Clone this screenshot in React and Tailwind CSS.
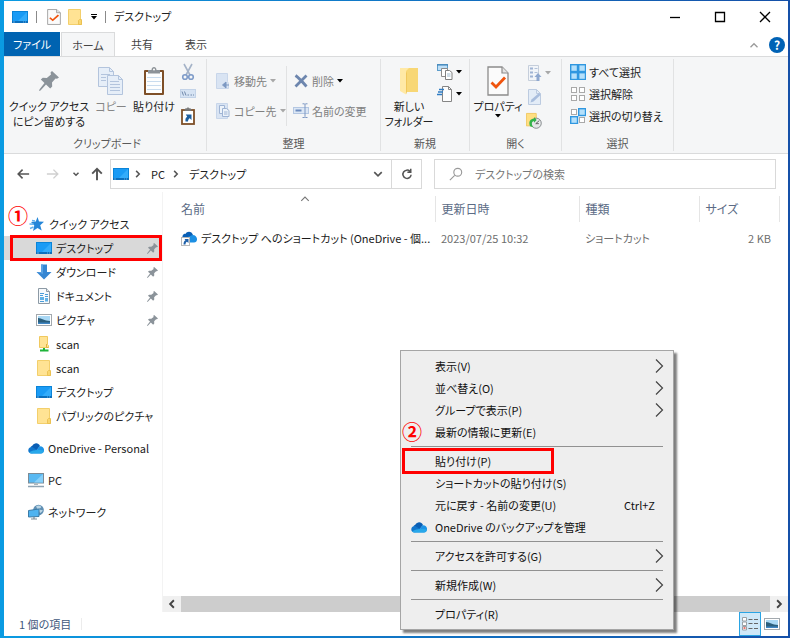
const MENU = [
  [
    { label: '表示(V)', sub: true },
    { label: '並べ替え(O)', sub: true },
    { label: 'グループで表示(P)', sub: true },
    { label: '最新の情報に更新(E)', mark: '②' },
  ],
  [
    { label: '貼り付け(P)', boxed: true },
    { label: 'ショートカットの貼り付け(S)' },
    { label: '元に戻す - 名前の変更(U)', keys: 'Ctrl+Z' },
    { label: 'OneDrive のバックアップを管理', icon: <CloudIcon /> },
  ],
  [{ label: 'アクセスを許可する(G)', sub: true }],
  [{ label: '新規作成(W)', sub: true }],
  [{ label: 'プロパティ(R)' }],
]

const QUICK = [
  { label: 'デスクトップ', icon: <DesktopIcon />, pinned: true, selected: true },
  { label: 'ダウンロード', icon: <DownloadIcon />, pinned: true },
  { label: 'ドキュメント', icon: <DocumentIcon />, pinned: true },
  { label: 'ピクチャ', icon: <PictureIcon />, pinned: true },
  { label: 'scan', icon: <NetFolderIcon /> },
  { label: 'scan', icon: <FolderIcon /> },
  { label: 'デスクトップ', icon: <DesktopIcon /> },
  { label: 'パブリックのピクチャ', icon: <FolderIcon /> },
]

const ROOTS = [
  { label: 'OneDrive - Personal', icon: <CloudIcon /> },
  { label: 'PC', icon: <PcIcon /> },
  { label: 'ネットワーク', icon: <NetworkIcon /> },
]

/* ---------- icons ---------- */

function DesktopIcon() {
  return (
    <svg viewBox="0 0 16 16" className="size-4 shrink-0">
      <rect x="0" y="2" width="16" height="12" fill="#0a84d8" />
      <path d="M1 3h14v9H1z" fill="#1a9bf5" />
      <path d="M15 3v9H6z" fill="#33acfb" />
      <path d="M0 12h16v2H0z" fill="#0b6fbd" />
      <path d="M1 13h2M11 13h1M13 13h1" stroke="#9fd7ff" strokeWidth=".6" />
    </svg>
  )
}

function FolderIcon() {
  return (
    <svg viewBox="0 0 16 16" className="size-4 shrink-0">
      <path d="M1.500.500h12v10l1 1v4h-13z" fill="#ffe394" stroke="#f3cf6b" />
      <path d="M12.500 10.500h2v5h-3v-4z" fill="#f9d66f" stroke="#e9bd4b" strokeWidth=".8" />
    </svg>
  )
}

function NetFolderIcon() {
  return (
    <svg viewBox="0 0 16 16" className="size-4 shrink-0">
      <path d="M3.500.500h8v8l1 1v2h-9z" fill="#ffe394" stroke="#f0c95f" />
      <path d="M10.500 8v3.500h2" fill="none" stroke="#e3b23c" />
      <path d="M8 12v2.500M4 14.500h8.500" stroke="#1fb43a" strokeWidth="2" />
    </svg>
  )
}

function CloudIcon() {
  return (
    <svg viewBox="0 0 16 16" className="size-4 shrink-0">
      <path d="M4.500 5.500C6 2.500 10.500 2 12 6l-4 5-5.500-4z" fill="#0a5fb5" />
      <path d="M3.600 13.500C-1 13.300-.8 7.200 4 6.800l6 4z" fill="#1276cc" />
      <path d="M11.500 6.300c5.500-.5 6 6.800 1.500 7.200H3.500L9.500 9z" fill="#1c93e6" />
      <path d="M1.200 12.300C5 10.500 8 9.500 15.800 10.500c-.2 1.700-1.300 3-3 3H3.800c-1.200 0-2-.4-2.600-1.200z" fill="#28a8ea" />
    </svg>
  )
}

function ShortcutCloudIcon() {
  return (
    <svg viewBox="0 0 16 16" className="size-4 shrink-0">
      <path d="M1.500 8C1 4 4 3.500 4.500 4 6 .500 11 1 12 5L8 10z" fill="#0a5fb5" />
      <path d="M11.300 5C17 4.700 17.500 12.500 13 12.500H7L4.500 8 8 6.500z" fill="#1c8fe3" />
      <rect x=".5" y="7.500" width="8" height="8" fill="#fff" stroke="#b8b8b8" />
      <path d="M2.500 14.500c0-3 1-4 2-4.300L3.500 9H7.500v4L6 11.700c-1 .3-1.500 1.300-1.500 2.800z" fill="#1e5fa8" />
    </svg>
  )
}

function DownloadIcon() {
  return (
    <svg viewBox="0 0 16 16" className="size-4 shrink-0">
      <path d="M5 .500h6V8h4.500L8 15.500.500 8H5z" fill="#3787d3" />
      <path d="M5 .500h2V10L1 8h4z" fill="#5aa2e2" />
    </svg>
  )
}

function DocumentIcon() {
  return (
    <svg viewBox="0 0 16 16" className="size-4 shrink-0">
      <path d="M2.500.500h8l3 3v12h-11z" fill="#f5f9fc" stroke="#8d9aa5" />
      <path d="M10.500.500v3h3" fill="#dde5eb" stroke="#8d9aa5" />
      <path d="M4 5.500h4M4 7.500h3M9 6.500h3M9 8.500h3M4 13.500h4" stroke="#4a9cd8" />
      <path d="M4 9h4v3H4zM9 10h3v3.500H9z" fill="#5fb0e6" />
    </svg>
  )
}

function PictureIcon() {
  return (
    <svg viewBox="0 0 16 16" className="size-4 shrink-0">
      <rect x=".5" y="2.500" width="15" height="11" fill="#fff" stroke="#a3a9ae" />
      <rect x="2" y="4" width="12" height="8" fill="#a9d8f5" />
      <path d="M2 6c4 0 6 3 12 3v3H2z" fill="#2b5f7d" />
      <path d="M2 10.500h12V12H2z" fill="#3f86c4" />
    </svg>
  )
}

function PcIcon() {
  return (
    <svg viewBox="0 0 16 16" className="size-4 shrink-0">
      <rect x=".5" y="1.500" width="15" height="9.500" fill="#59b9f2" stroke="#7c8b96" />
      <path d="M15 2v8.500H6z" fill="#86d0fa" />
      <path d="M6 11.500h4v1.500H6z" fill="#a9b5bd" />
      <path d="M0 14.500h16" stroke="#8fa3b2" strokeWidth="1.500" />
    </svg>
  )
}

function NetworkIcon() {
  return (
    <svg viewBox="0 0 16 16" className="size-4 shrink-0">
      <circle cx="10.500" cy="6" r="5.300" fill="#5f8fb3" />
      <path d="M8 2.500c2-1.500 4-1 5 0s-1 2-2 2 1 1.500 3 1.500-1 3-2 3z" fill="#b9d4e4" />
      <path d="M.500 6.500l10.500-1.500v7.500l-10.500.500z" fill="#4fb3f0" stroke="#3c7ba6" />
      <path d="M6 13v1.500M3 15h6" stroke="#7c8b96" strokeWidth="1.200" />
    </svg>
  )
}

function StarIcon() {
  return (
    <svg viewBox="0 0 16 16" className="size-4 shrink-0">
      <path d="M8.500 1l1.500 4.500 5 .3-3.800 3.500 1.500 5.200L8.500 12 4 15l1.300-5.500L2 6l4.800-.5z" fill="#2586d8" />
      <path d="M3 4.500l3 .5M.500 8l4.500.300M1 12.500l3.500-1.500" stroke="#63b2ee" strokeWidth="1.400" />
    </svg>
  )
}

function PinIcon({ className = 'size-3' }) {
  return (
    <svg viewBox="0 0 20 20" className={`shrink-0 ${className}`}>
      <path d="M13 0l7 6.500-2 1.300-1.500-.3-3.500 4 .2 4-2 2-4.200-4L1.500 19.500 0 20l.6-1.700L5.500 12 1.800 8.500l2-1.800 4 .3 4.200-3.500-.5-2z" fill="#8b939a" />
    </svg>
  )
}

function PropertiesIcon({ className = 'h-4 w-3.5' }) {
  return (
    <svg viewBox="0 0 22 30" preserveAspectRatio="none" className={className}>
      <path d="M1 1h14l6 6v22H1z" fill="#fbfbfb" stroke="#8c8c8c" strokeWidth="1.300" />
      <path d="M15 1v6h6" fill="#e4e4e4" stroke="#8c8c8c" strokeWidth="1.200" />
      <path d="M4.500 16.500l4.500 4.500 9-9.500" fill="none" stroke="#f0540e" strokeWidth="2.800" />
    </svg>
  )
}

function CopyIcon() {
  return (
    <svg viewBox="0 0 26 28" className="h-7 w-[26px]">
      <g fill="#e6eef8" stroke="#b3c4dd">
        <path d="M.500.500h11l4 4v15H.500z" />
        <path d="M11.500.500v4h4" fill="none" />
        <path d="M3 7.500h9M3 10.500h5M3 13.500h5" />
        <path d="M9.500 8.500h11l4 4v15h-15z" />
        <path d="M20.500 8.500v4h4" fill="none" />
        <path d="M12 14.500h9M12 17.500h10M12 20.500h10M12 23.500h10" />
      </g>
    </svg>
  )
}

function PasteIcon() {
  return (
    <svg viewBox="0 0 22 30" className="h-[30px] w-[22px]">
      <rect x="1" y="4" width="20" height="25" rx="1" fill="#7e4f27" />
      <rect x="3" y="6" width="16" height="21" fill="#fdfefe" />
      <path d="M4 11.500h14M4 15.500h14M4 19.500h14M4 23.500h14" stroke="#c9dcee" />
      <path d="M5 7.500V4h3.500C8.500 0 13.500 0 13.500 4H17v3.500z" fill="#8d9398" />
      <circle cx="11" cy="3.500" r="1" fill="#fff" />
    </svg>
  )
}

function CutIcon() {
  return (
    <svg viewBox="0 0 14 18" className="h-[18px] w-3.5" fill="none">
      <path d="M3 1l6 11M11 1L5 12" stroke="#a5b3c8" strokeWidth="1.600" />
      <circle cx="4" cy="14" r="2.300" stroke="#7f9cc9" strokeWidth="1.600" />
      <circle cx="10" cy="14" r="2.300" stroke="#7f9cc9" strokeWidth="1.600" />
    </svg>
  )
}

function CopyPathIcon() {
  return (
    <svg viewBox="0 0 16 10" className="h-2.5 w-4">
      <rect x=".5" y=".5" width="15" height="8" fill="#d6e3f3" stroke="#c3d3e8" />
      <path d="M2 2.500l1.500 4M4.500 2.500l1.500 4M7.500 6H9M10.500 6H12M13 6h1" stroke="#7189ab" />
    </svg>
  )
}

function PasteShortcutIcon() {
  return (
    <svg viewBox="0 0 14 18" className="h-[18px] w-3.5">
      <rect x="1" y="3" width="12" height="14" fill="#fff" stroke="#7e4f27" strokeWidth="1.800" />
      <path d="M4 3.500h6V2H8.500C8 .500 6 .500 5.500 2H4z" fill="#777" stroke="#777" />
      <path d="M4.500 14.500c-.3-3 .3-4 1.700-4.800L4.800 7.500H10.500v5.500L8.700 11.300c-1 .5-1.500 1.500-1.700 3.200z" fill="#1d5e9e" />
    </svg>
  )
}

function MoveToIcon() {
  return (
    <svg viewBox="0 0 14 16" className="h-4 w-3.5">
      <path d="M.500.500h11v8l1 2v5H.500z" fill="#d9e4f3" stroke="#c8d6ea" />
      <path d="M13 12H8M10 9l-3.500 3L10 15z" fill="#7d98c2" stroke="#7d98c2" />
    </svg>
  )
}

function CopyToIcon() {
  return (
    <svg viewBox="0 0 14 16" className="h-4 w-3.5">
      <path d="M.500.500h11v15H.500z" fill="#d9e4f3" stroke="#c8d6ea" />
      <path d="M3.500 2.500h5v8h-5z" fill="#edf3fa" stroke="#9fb4d4" />
      <path d="M6.500 5.500h4l2.500 2v6H6.500z" fill="#edf3fa" stroke="#9fb4d4" />
      <path d="M8 9h3.500M8 11h3.500" stroke="#9fb4d4" />
    </svg>
  )
}

function DeleteIcon() {
  return (
    <svg viewBox="0 0 14 14" className="size-3.5">
      <path d="M1.500 1.500C5 4 9 8.500 12.500 12.500M12.500 1.500C9 5 5 9 1.500 12.500" stroke="#6d86ae" strokeWidth="2.800" />
    </svg>
  )
}

function RenameIcon() {
  return (
    <svg viewBox="0 0 16 16" className="size-4">
      <rect x=".5" y="4.500" width="15" height="6" fill="#dce7f5" stroke="#b4c7e2" />
      <path d="M2.500 7.500h6" stroke="#6d8cbf" strokeWidth="2" />
      <path d="M12 1.500v12M9.500.800h2l.5.700.5-.7h2M9.500 14.500h2l.5-.7.500.7h2" stroke="#7c97c3" fill="none" />
    </svg>
  )
}

function NewFolderIcon() {
  return (
    <svg viewBox="0 0 20 28" className="h-7 w-5">
      <path d="M6 1h13v24H6z" fill="#f8d775" />
      <path d="M1 1h9l-3 3v23.500L1 24z" fill="#ffe9a6" />
      <path d="M7 5l1 1v19l-1 2.500z" fill="#f0c75c" />
    </svg>
  )
}

function NewItemIcon() {
  return (
    <svg viewBox="0 0 16 16" className="size-4">
      <rect x=".5" y=".5" width="10" height="6" fill="#bfe0f8" stroke="#5d9dcb" />
      <path d="M0 1h11" stroke="#3b7fb4" />
      <path d="M4.500 4.500h6v8h-6z" fill="#fff" stroke="#8b8b8b" />
      <path d="M8.500 6.500h4l2.500 2v7H8.500z" fill="#fff" stroke="#7f7f7f" />
      <path d="M10 10h3.500M10 12h3.500" stroke="#9db8cc" />
    </svg>
  )
}

function EasyAccessIcon() {
  return (
    <svg viewBox="0 0 16 16" className="size-4">
      <path d="M5.500.500h6l3 3v12h-9z" fill="#fdfdfd" stroke="#858585" />
      <path d="M11.500.500v3h3" fill="none" stroke="#858585" />
      <path d="M2 3.500h5M1 6h5M0 8.500h5" stroke="#2f7cc4" strokeWidth="1.300" />
    </svg>
  )
}

function OpenIcon() {
  return (
    <svg viewBox="0 0 16 16" className="size-4">
      <path d="M2.500.500h10v15h-10z" fill="#f2f5f9" stroke="#c5cedb" />
      <path d="M4 2.500h3v2H4zM4 6.500h3v2H4zM4 10.500h3v2H4z" fill="#9fb4d4" />
      <path d="M8.500 3.500h3M8.500 7.500h3" stroke="#b3c2d8" />
      <path d="M12 8l3.500 4h-2v4h-3v-4h-2z" fill="#8fa8cf" />
    </svg>
  )
}

function EditIcon() {
  return (
    <svg viewBox="0 0 16 16" className="size-4">
      <path d="M2.500.500h8l4 4v11h-12z" fill="#e3ecf7" stroke="#bccbe0" />
      <path d="M10.500.500v4h4" fill="none" stroke="#bccbe0" />
      <path d="M4.500 13.500l1-3L13 4l1.500 2-7 6.500z" fill="#a8bddd" />
    </svg>
  )
}

function HistoryIcon() {
  return (
    <svg viewBox="0 0 18 18" className="size-[18px]">
      <path d="M.500.500h11v14H.500z" fill="#ffdf82" stroke="#efc65c" />
      <circle cx="11.500" cy="11.500" r="5.700" fill="#e4e7e8" stroke="#7d8285" />
      <path d="M11 12L15 8.500M11 12h3.500" stroke="#555" fill="none" />
      <path d="M4.500 15C2.500 9.500 5 6.500 9 6.500V4.500L12 8 9 11V9.300C6.500 9.300 5.500 12 8 16z" fill="#32b44a" />
    </svg>
  )
}

// Four cells, each either on (blue) or off (grey)
function CellsIcon({ cells }) {
  const spots = [[1, 1], [9, 1], [1, 9], [9, 9]]
  return (
    <svg viewBox="0 0 16 16" className="size-4">
      {cells.map((on, i) => {
        const [x, y] = spots[i]
        return on ? (
          <rect key={i} x={x - 0.3} y={y - 0.3} width="6.800" height="6.800" fill="#b5e0fb" stroke="#2f97e0" strokeWidth="1.400" />
        ) : (
          <rect key={i} x={x + 0.5} y={y + 0.5} width="5" height="5" fill="#fff" stroke="#a9a9a9" />
        )
      })}
    </svg>
  )
}

function Arrow({ className = 'text-black' }) {
  return (
    <svg viewBox="0 0 6 4" className={`h-1 w-1.5 shrink-0 ${className}`}>
      <path d="M0 0h6L3 3.500z" fill="currentColor" />
    </svg>
  )
}

function Line({ d, className, width = 1.5 }) {
  return (
    <svg viewBox="0 0 16 16" className={`shrink-0 ${className}`} fill="none" stroke="currentColor" strokeWidth={width}>
      <path d={d} />
    </svg>
  )
}

/* ---------- ribbon ---------- */

function Group({ title, className, children }) {
  return (
    <section className={`my-0.5 border-r border-[#e1e2e3] ${className}`}>
      <div className="flex h-[76px]">{children}</div>
      <h2 className="text-center leading-4 text-[#5a5a5a]">{title}</h2>
    </section>
  )
}

function BigButton({ icon, lines, className, children }) {
  return (
    <button className={`flex flex-col items-center leading-[15px] whitespace-nowrap ${className}`}>
      <span className="flex h-10 items-center justify-center pt-1">{icon}</span>
      {lines.map((line) => (
        <span key={line}>{line}</span>
      ))}
      {children}
    </button>
  )
}

function SmallButton({ icon, label, name, arrow, className = 'h-[22px]' }) {
  return (
    <button aria-label={name} className={`flex items-center gap-[3px] whitespace-nowrap ${className}`}>
      <span className="flex w-4 shrink-0 justify-center">{icon}</span>
      {label}
      {arrow && <Arrow className={arrow} />}
    </button>
  )
}

function Ribbon() {
  return (
    <div className="flex border-y border-[#dadbdc] bg-[#f5f6f7]">
      <Group title="クリップボード" className="w-[203px] pl-1">
        <BigButton className="w-[82px]" icon={<PinIcon className="size-5" />} lines={['クイック アクセス', 'にピン留めする']} />
        <BigButton className="w-[42px] text-[#858585]" icon={<CopyIcon />} lines={['コピー']} />
        <BigButton className="w-11" icon={<PasteIcon />} lines={['貼り付け']} />
        <div className="ml-1 pt-0.5">
          <SmallButton name="切り取り" icon={<CutIcon />} />
          <SmallButton name="パスのコピー" icon={<CopyPathIcon />} />
          <SmallButton name="ショートカットの貼り付け" icon={<PasteShortcutIcon />} />
        </div>
      </Group>
      <Group title="整理" className="w-[174px] text-[#808080]">
        <div className="mt-[7px] mb-[9px] w-20 border-r border-[#e1e2e3] pl-2">
          <SmallButton className="h-[30px]" icon={<MoveToIcon />} label="移動先" arrow="text-[#a8a8a8]" />
          <SmallButton className="h-[30px]" icon={<CopyToIcon />} label="コピー先" arrow="text-[#a8a8a8]" />
        </div>
        <div className="mt-[7px] pl-1.5">
          <SmallButton className="h-[30px]" icon={<DeleteIcon />} label="削除" arrow="text-black" />
          <SmallButton className="h-[30px]" icon={<RenameIcon />} label="名前の変更" />
        </div>
      </Group>
      <Group title="新規" className="w-[89px]">
        <BigButton className="w-14" icon={<NewFolderIcon />} lines={['新しい', 'フォルダー']} />
        <div className="pt-0.5">
          <SmallButton name="新しいアイテム" icon={<NewItemIcon />} arrow="text-black" />
          <SmallButton name="ショートカット" icon={<EasyAccessIcon />} arrow="text-black" />
        </div>
      </Group>
      <Group title="開く" className="w-[92px]">
        <BigButton className="w-14" icon={<PropertiesIcon className="h-[30px] w-[22px]" />} lines={['プロパティ']}>
          <Arrow />
        </BigButton>
        <div className="pt-0.5">
          <SmallButton name="開く" className="h-6" icon={<OpenIcon />} arrow="text-[#a8a8a8]" />
          <SmallButton name="編集" className="h-6" icon={<EditIcon />} />
          <SmallButton name="履歴" className="h-6" icon={<HistoryIcon />} />
        </div>
      </Group>
      <Group title="選択" className="w-28">
        <div className="pt-0.5 pl-2">
          <SmallButton icon={<CellsIcon cells={[1, 1, 1, 1]} />} label="すべて選択" />
          <SmallButton icon={<CellsIcon cells={[0, 0, 0, 0]} />} label="選択解除" />
          <SmallButton icon={<CellsIcon cells={[0, 1, 1, 0]} />} label="選択の切り替え" />
        </div>
      </Group>
    </div>
  )
}

/* ---------- window parts ---------- */

function TitleBar() {
  return (
    <header className="flex h-[31px] items-center pl-2">
      <DesktopIcon />
      <span className="ml-2 h-3 w-px bg-[#8a8a8a]" />
      <button aria-label="プロパティ" className="ml-2.5"><PropertiesIcon /></button>
      <button aria-label="新しいフォルダー" className="ml-1.5"><FolderIcon /></button>
      <button aria-label="カスタマイズ" className="ml-2 flex flex-col items-center gap-px">
        <span className="h-px w-1.5 bg-black" />
        <Arrow />
      </button>
      <span className="ml-2 h-3 w-px bg-[#8a8a8a]" />
      <h1 className="ml-2 flex-1">デスクトップ</h1>
      <div className="flex pr-px text-black">
        <button aria-label="最小化" className="flex w-[45px] justify-center"><Line d="M3 8.500h10" className="size-4" width={1.3} /></button>
        <button aria-label="最大化" className="flex w-[45px] justify-center"><Line d="M3.500 3.500h9v9h-9z" className="size-4" width={1.3} /></button>
        <button aria-label="閉じる" className="flex w-[45px] justify-center"><Line d="M3 3l10 10M13 3L3 13" className="size-4" width={1.3} /></button>
      </div>
    </header>
  )
}

function Tabs() {
  return (
    <div className="-mb-px flex h-[25px] items-stretch text-[#444]">
      <button className="mb-px w-14 bg-[#0063b1] text-white">ファイル</button>
      <button className="ml-px w-[54px] border border-b-0 border-[#dadbdc] bg-[#f5f6f7]">ホーム</button>
      <button className="w-[54px]">共有</button>
      <button className="w-[54px]">表示</button>
      <div className="ml-auto flex items-center gap-2 pr-[3px]">
        <button aria-label="リボンの最小化"><Line d="M4 10.500l4-4 4 4" className="size-3.5 text-[#9a9a9a]" /></button>
        <button aria-label="ヘルプ" className="flex size-4 items-center justify-center rounded-full bg-[#0062b5] text-xs font-bold text-white">?</button>
      </div>
    </div>
  )
}

function NavRow() {
  return (
    <div className="flex items-center gap-3 pt-[5px] pr-3 pb-[3px] pl-3">
      <div className="flex flex-1 items-center">
        <div className="flex w-[94px] shrink-0 items-center text-[#555]">
          <button aria-label="戻る"><Line d="M15 8H2.500M7.500 3l-5 5 5 5" className="size-3.5" width={1.8} /></button>
          <button aria-label="進む" className="ml-4 text-[#d0d0d0]"><Line d="M1 8h12.500M8.500 3l5 5-5 5" className="size-3.5" width={1.6} /></button>
          <button aria-label="履歴" className="ml-3"><Line d="M3 5.500l5 5 5-5" className="size-2" width={3} /></button>
          <button aria-label="上へ" className="ml-2.5"><Line d="M8 15V2M2.500 7.500L8 2l5.500 5.500" className="size-3.5" width={2.2} /></button>
        </div>
        <nav className="flex h-[30px] flex-1 items-center border border-[#d9d9d9] pl-0.5">
          <DesktopIcon />
          <Line d="M5 3l5 5-5 5" className="ml-1 size-2.5 text-[#555]" width={2.4} />
          <button className="ml-2">PC</button>
          <Line d="M5 3l5 5-5 5" className="ml-1.5 size-2.5 text-[#555]" width={2.4} />
          <button className="ml-2">デスクトップ</button>
          <button aria-label="以前の場所" className="mr-2 ml-auto"><Line d="M2 5l6 6 6-6" className="size-2.5 text-[#555]" width={2.6} /></button>
          <button aria-label="最新の情報に更新" className="flex h-full w-[30px] items-center justify-center border-l border-[#d9d9d9]">
            <Line d="M12 4.500A5.500 5.500 0 1 0 13.500 9M13 1v4.500H8.500" className="size-3 text-[#555]" width={2} />
          </button>
        </nav>
      </div>
      <label className="flex h-[30px] w-[342px] items-center gap-3 border border-[#d9d9d9] px-3.5">
        <Line d="M6.800 9.200L1 15M14.500 6a4.500 4.500 0 1 1-9 0 4.500 4.500 0 1 1 9 0z" className="size-3.5 text-[#999]" width={1.3} />
        <input aria-label="検索" placeholder="デスクトップの検索" className="min-w-0 flex-1 outline-none placeholder:text-[#757575]" />
      </label>
    </div>
  )
}

function Sidebar() {
  return (
    <aside className="w-[159px] shrink-0 border-r border-[#f3f3f3] pt-5 whitespace-nowrap">
      <a href="#quick" className="relative flex h-6 items-center gap-1 pl-[25px]">
        <span className="absolute -top-2 left-1 text-[20px] leading-6 font-bold text-[#f00]">①</span>
        <StarIcon />
        クイック アクセス
      </a>
      {QUICK.map((item, i) => (
        <a
          key={i}
          href="#item"
          className={`relative flex h-6 items-center gap-1 pl-8 ${item.selected ? 'bg-[#d9d9d9]' : ''}`}
        >
          {item.icon}
          <span className="flex-1">{item.label}</span>
          {item.pinned && <PinIcon className="mr-1 size-[11px]" />}
          {item.selected && <span className="absolute -inset-y-px right-0 left-1.5 border-3 border-[#f00]" />}
        </a>
      ))}
      {ROOTS.map((item) => (
        <a key={item.label} href="#root" className="mt-2 flex h-6 items-center gap-1 pl-6">
          {item.icon}
          {item.label}
        </a>
      ))}
    </aside>
  )
}

function FileList() {
  return (
    <main className="flex min-w-0 flex-1 flex-col pt-1">
      <div className="relative flex-1">
        <Line d="M2 11l6-6 6 6" className="absolute -top-0.5 left-[137px] size-2.5 text-[#777]" width={1.8} />
        <table className="w-full table-fixed text-left whitespace-nowrap">
          <colgroup>
            <col />
            <col className="w-36" />
            <col className="w-[120px]" />
            <col className="w-20" />
            <col className="w-[9px]" />
          </colgroup>
          <thead className="text-xs text-[#5b6b85]">
            <tr className="h-[26px]">
              <th className="border-r border-[#e5e5e5] pl-[18px] font-normal">名前</th>
              <th className="border-r border-[#e5e5e5] pl-1.5 font-normal">更新日時</th>
              <th className="border-r border-[#e5e5e5] pl-1.5 font-normal">種類</th>
              <th className="border-r border-[#e5e5e5] pl-1.5 font-normal">サイズ</th>
              <td />
            </tr>
          </thead>
          <tbody className="text-[#6d6d6d]">
            <tr className="h-8">
              <td className="pl-[18px] text-[#1a1a1a]">
                <a href="#file" className="flex items-center gap-1">
                  <ShortcutCloudIcon />
                  デスクトップ へのショートカット (OneDrive - 個...
                </a>
              </td>
              <td className="pl-1.5">2023/07/25 10:32</td>
              <td className="pl-1.5">ショートカット</td>
              <td className="pr-2 text-right">2 KB</td>
              <td />
            </tr>
          </tbody>
        </table>
      </div>
      <div className="flex h-4 items-stretch bg-[#f0f0f0] text-[#444]">
        <button aria-label="左" className="flex w-[18px] items-center justify-center"><Line d="M11 2L5 8l6 6" className="size-2.5" width={3} /></button>
        <div className="flex-1 bg-[#cdcdcd]" />
        <button aria-label="右" className="flex w-[18px] items-center justify-center"><Line d="M5 2l6 6-6 6" className="size-2.5" width={3} /></button>
      </div>
    </main>
  )
}

function StatusBar() {
  return (
    <footer className="flex h-6 items-center pl-[15px] text-[#3f587c]">
      <span>1 個の項目</span>
      <span className="ml-2.5 h-3 w-px bg-[#ececec]" />
      <button aria-label="詳細" className="ml-auto flex h-6 w-[22px] items-center justify-center border border-[#2aa4e4] bg-[#cfe8f8]">
        <svg viewBox="0 0 16 14" className="h-3.5 w-4">
          <path d="M.500.500h4v3.500h-4zM.500 5h4v3.500h-4zM.500 9.500h4V13h-4z" fill="#fff" stroke="#9aa0a5" />
          <path d="M1.500 11h2" stroke="#e0483e" strokeWidth="1.500" />
          <path d="M6.500 2.500h4M12 2.500h4M6.500 6.500h4M12 6.500h4M6.500 11.500h4M12 11.500h4" stroke="#666" />
        </svg>
      </button>
      <button aria-label="大アイコン" className="mr-2 ml-[3px]"><PictureIcon /></button>
    </footer>
  )
}

function ContextMenu() {
  return (
    <div
      role="menu"
      className="absolute top-[350px] left-[400px] w-[274px] border border-[#a5a5a5] bg-[#eee] py-1 text-[#111] shadow-[3px_3px_2px_rgba(0,0,0,0.5)]"
    >
      {MENU.map((section, i) => (
        <div key={i} className={i > 0 ? 'relative mt-[7px] before:absolute before:inset-x-2.5 before:-top-1 before:h-px before:bg-[#919191]' : ''}>
          {section.map((item) => (
            <button
              key={item.label}
              role="menuitem"
              className="relative flex h-[22px] w-full items-center pr-2.5 pl-[34px] text-left whitespace-nowrap"
            >
              {item.icon && <span className="absolute left-2.5">{item.icon}</span>}
              {item.mark && <span className="absolute left-px text-[20px] leading-5 font-bold text-[#f00]">{item.mark}</span>}
              <span className="flex-1">{item.label}</span>
              {item.keys && <span className="pr-2">{item.keys}</span>}
              {item.sub && <Line d="M5 1.500L11.500 8 5 14.500" className="-mr-1 size-4 text-[#444]" width={1.2} />}
              {item.boxed && <span className="absolute -inset-y-0.5 left-px w-[152px] border-3 border-[#f00]" />}
            </button>
          ))}
        </div>
      ))}
    </div>
  )
}

export default function App() {
  return (
    <div
      lang="ja"
      className="relative min-h-screen bg-linear-to-r from-[#0a9be2] to-[#1550a8] pt-px pr-0.5 pb-0.5 pl-1 font-['Noto_Sans_CJK_JP',sans-serif] text-[11px] text-[#222] [font-feature-settings:'palt']"
    >
      <div className="flex min-h-[calc(100vh-3px)] flex-col bg-white">
        <TitleBar />
        <Tabs />
        <Ribbon />
        <NavRow />
        <div className="flex flex-1">
          <Sidebar />
          <FileList />
        </div>
        <StatusBar />
      </div>
      <ContextMenu />
    </div>
  )
}
